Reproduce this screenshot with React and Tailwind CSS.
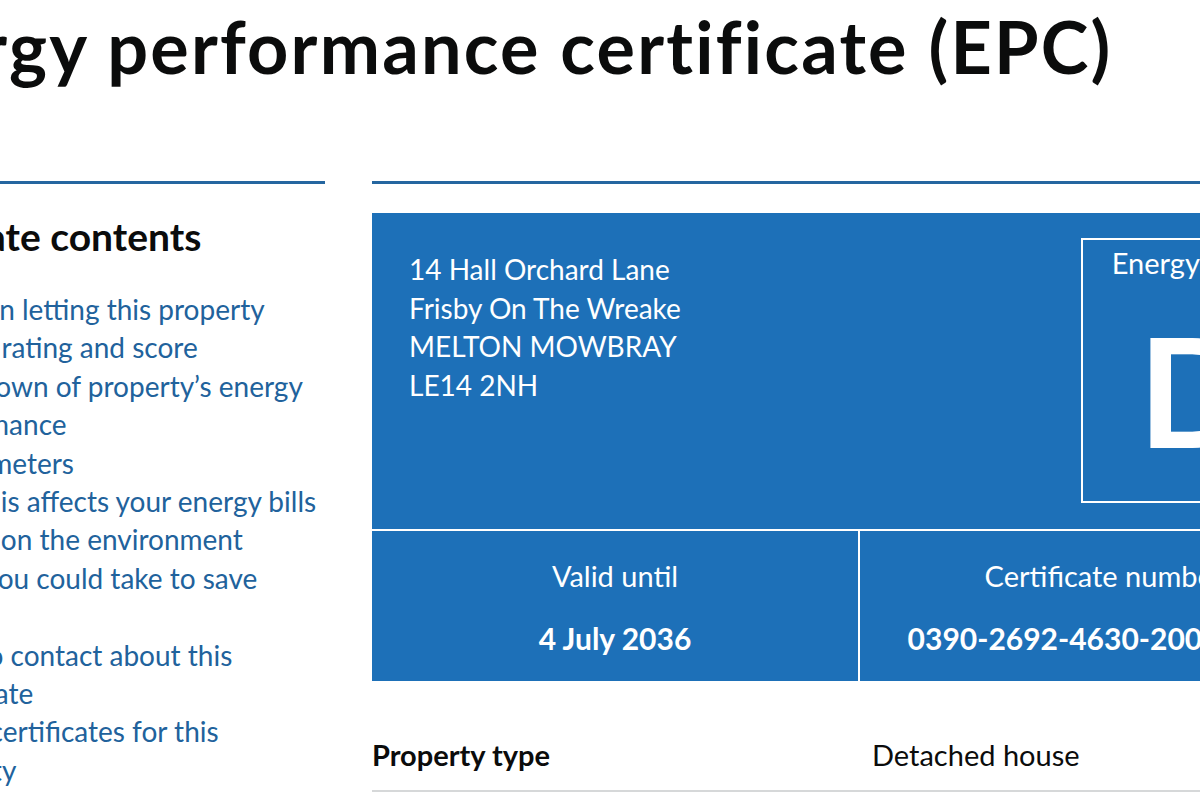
import React from 'react';

const contents = [
    ['Rules on letting this property'],
    ['Energy rating and score'],
    ['Breakdown of property’s energy', 'performance'],
    ['Smart meters'],
    ['How this affects your energy bills'],
    ['Impact on the environment'],
    ['Steps you could take to save', 'energy'],
    ['Who to contact about this', 'certificate'],
    ['Other certificates for this', 'property'],
];

const App = () => {
    return (
        <div className="w-[1200px] h-[800px] overflow-hidden bg-white text-[#0b0c0c] font-['Lato',sans-serif]">
            <div className="ml-[-98px] w-[1460px]">
                <h1 className="ml-[-48px] pt-[10px] text-[72px] font-bold leading-none tracking-[2.2px] whitespace-nowrap">
                    Energy performance certificate (EPC)
                </h1>

                <div className="mt-[99px] flex gap-[47px]">
                    {/* Contents */}
                    <nav className="w-[423px] shrink-0 border-t-[3px] border-[#2566a0] pt-[30px]">
                        <h2 className="ml-[-44px] text-[39px] font-bold leading-[45px] whitespace-nowrap">Certificate contents</h2>
                        <ul className="mt-[31px] ml-[8px] text-[28px] leading-[38.4px] text-[#21629c]">
                            {contents.map((lines) => (
                                <li key={lines[0]} className="whitespace-nowrap">
                                    <a href="#">
                                        {lines.map((l) => (
                                            <span key={l} className="block">{l}</span>
                                        ))}
                                    </a>
                                </li>
                            ))}
                        </ul>
                    </nav>

                    {/* Certificate */}
                    <main className="w-[976px] shrink-0 border-t-[3px] border-[#2566a0] pt-[29px]">
                        <div className="bg-[#1d70b8] text-white text-[28px] leading-[38.5px]">
                            <div className="flex justify-between h-[316px] px-[37px]">
                                <p className="pt-[37px]">
                                    14 Hall Orchard Lane<br />
                                    Frisby On The Wreake<br />
                                    MELTON MOWBRAY<br />
                                    LE14 2NH
                                </p>
                                <div className="mt-[25px] w-[230px] h-[265px] border-2 border-white flex flex-col items-center pt-[4px]">
                                    <p className="text-[29px]">Energy rating</p>
                                    <p className="mt-[30px] text-[152px] font-bold leading-none">D</p>
                                </div>
                            </div>
                            <div className="grid grid-cols-2 border-t-2 border-white h-[152px] text-[29px]">
                                <div className="flex flex-col items-center pt-[26px] border-r-2 border-white">
                                    <p>Valid until</p>
                                    <p className="mt-[23px] text-[30px] font-bold">4 July 2036</p>
                                </div>
                                <div className="flex flex-col items-center pt-[26px]">
                                    <p>Certificate number</p>
                                    <p className="mt-[23px] text-[30px] font-bold whitespace-nowrap">0390-2692-4630-2006-7401</p>
                                </div>
                            </div>
                        </div>

                        <dl className="mt-[40px] text-[29px] leading-[38.5px]">
                            <div className="flex pt-[15px] pb-[15px] border-b-2 border-[#d6d8d9]">
                                <dt className="w-[500px] font-bold">Property type</dt>
                                <dd>Detached house</dd>
                            </div>
                        </dl>
                    </main>
                </div>
            </div>
        </div>
    );
};

export default App;
